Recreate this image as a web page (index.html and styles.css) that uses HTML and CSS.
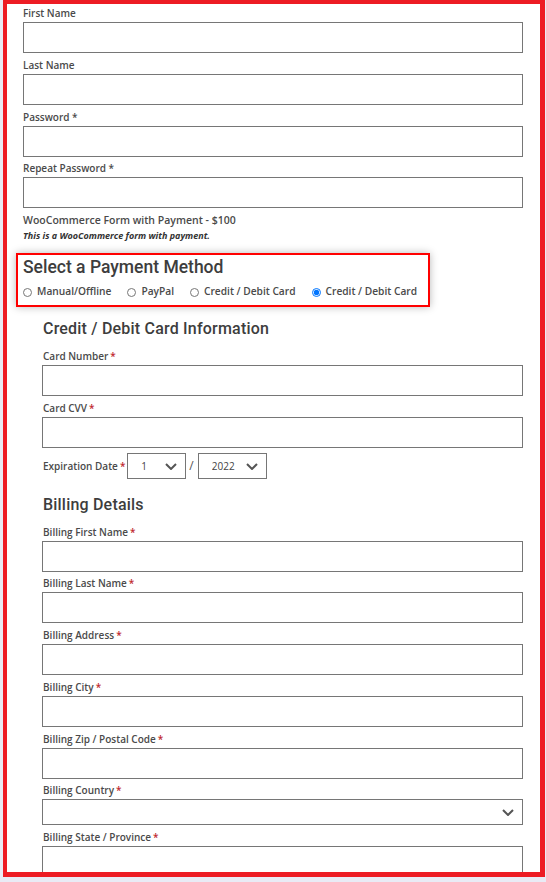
FILE: index.html
```html
<!DOCTYPE html>
<html lang="en">
<head>
  <meta charset="UTF-8">
  <meta name="viewport" content="width=device-width, initial-scale=1.0">
  <title>WooCommerce Form with Payment</title>
  <link rel="stylesheet" href="styles.css">
</head>
<body>
  <div class="frame">
    <form class="reg-form">
      <div class="field">
        <label>First Name</label>
        <input type="text">
      </div>
      <div class="field">
        <label>Last Name</label>
        <input type="text">
      </div>
      <div class="field">
        <label>Password *</label>
        <input type="password">
      </div>
      <div class="field">
        <label>Repeat Password *</label>
        <input type="password">
      </div>

      <p class="product-name">WooCommerce Form with Payment - $100</p>
      <p class="product-desc">This is a WooCommerce form with payment.</p>

      <div class="payment-box">
        <h3>Select a Payment Method</h3>
        <div class="gateways">
          <label class="gateway"><input type="radio" name="gateway">Manual/Offline</label>
          <label class="gateway"><input type="radio" name="gateway">PayPal</label>
          <label class="gateway"><input type="radio" name="gateway">Credit / Debit Card</label>
          <label class="gateway"><input type="radio" name="gateway" checked>Credit / Debit Card</label>
        </div>
      </div>

      <div class="card-section">
        <h4>Credit / Debit Card Information</h4>
        <div class="field">
          <label>Card Number<span class="req">*</span></label>
          <input type="text">
        </div>
        <div class="field">
          <label>Card CVV<span class="req">*</span></label>
          <input type="text">
        </div>
        <div class="expiry">
          <label>Expiration Date<span class="req">*</span></label>
          <div class="select-wrap month">
            <select><option>1</option></select>
            <svg class="chevron" width="12" height="7" viewBox="0 0 12 7"><polyline points="1,1 6,6 11,1"/></svg>
          </div>
          <span class="slash">/</span>
          <div class="select-wrap year">
            <select><option>2022</option></select>
            <svg class="chevron" width="12" height="7" viewBox="0 0 12 7"><polyline points="1,1 6,6 11,1"/></svg>
          </div>
        </div>

        <h4 class="billing-title">Billing Details</h4>
        <div class="field">
          <label>Billing First Name<span class="req">*</span></label>
          <input type="text">
        </div>
        <div class="field">
          <label>Billing Last Name<span class="req">*</span></label>
          <input type="text">
        </div>
        <div class="field">
          <label>Billing Address<span class="req">*</span></label>
          <input type="text">
        </div>
        <div class="field">
          <label>Billing City<span class="req">*</span></label>
          <input type="text">
        </div>
        <div class="field">
          <label>Billing Zip / Postal Code<span class="req">*</span></label>
          <input type="text">
        </div>
        <div class="field">
          <label>Billing Country<span class="req">*</span></label>
          <div class="select-wrap country">
            <select><option></option></select>
            <svg class="chevron" width="12" height="7" viewBox="0 0 12 7"><polyline points="1,1 6,6 11,1"/></svg>
          </div>
        </div>
        <div class="field">
          <label>Billing State / Province<span class="req">*</span></label>
          <input type="text">
        </div>
      </div>
    </form>
  </div>
</body>
</html>
```

FILE: styles.css
```css
body {
  font-family: 'Open Sans', 'Noto Sans', sans-serif;
  background-color: #e9ebf5;
  color: #444;
  margin: 0;
  padding: 0;
}
.frame {
  margin: 0 1px 0 3px;
  height: 877px;
  box-sizing: border-box;
  background-color: #fff;
  border: solid #ed1c24;
  border-width: 4px 5px 5px 4px;
  overflow: hidden;
}
.reg-form {
  padding: 2px 17px 0 16px;
}
.field {
  margin-bottom: 4.75px;
}
.field label {
  display: block;
  font-size: 10px;
  font-weight: 600;
  line-height: 14px;
  color: #4a4a4a;
  margin-bottom: 2px;
}
.field input {
  display: block;
  width: 100%;
  height: 31px;
  box-sizing: border-box;
  border: 1px solid #767676;
  margin: 0;
  padding: 0 8px;
  font-family: inherit;
}
.req {
  color: #c0282d;
  margin-left: 2px;
}
.product-name {
  margin: 0;
  font-size: 10.5px;
  line-height: 15px;
  font-weight: 600;
  color: #4a4a4a;
}
.product-desc {
  margin: 2px 0 0;
  font-size: 9px;
  line-height: 12px;
  font-style: italic;
  font-weight: 700;
  color: #333;
}
.payment-box {
  margin: 11px 0 0 -7px;
  width: 414px;
  box-sizing: border-box;
  border: 2px solid #f00;
  padding: 1px 6px 7px 5px;
  box-shadow: 0 0 8px rgba(0, 0, 0, 0.28);
}
.payment-box h3 {
  margin: 0;
  font-family: Roboto, 'Open Sans', sans-serif;
  font-size: 17.5px;
  font-weight: 500;
  line-height: 22px;
  color: #3d3d3d;
}
.gateways {
  display: flex;
  gap: 16px;
  margin-top: 6px;
  white-space: nowrap;
}
.gateway {
  display: flex;
  align-items: center;
  gap: 5px;
  font-size: 10.2px;
  font-weight: 600;
  line-height: 14px;
  color: #4a4a4a;
}
.gateway input {
  width: 9px;
  height: 9px;
  margin: 2px 0 0;
}
.card-section {
  margin-left: 19px;
}
.card-section label {
  padding-left: 1px;
}
.card-section h4 {
  margin: 12px 0 10px 1px;
  font-family: Roboto, 'Open Sans', sans-serif;
  font-size: 16px;
  font-weight: 500;
  letter-spacing: 0.2px;
  line-height: 20px;
  color: #3d3d3d;
}
.card-section h4.billing-title {
  margin-top: 16px;
}
.expiry {
  display: flex;
  align-items: center;
}
.expiry label {
  font-size: 10px;
  font-weight: 600;
  line-height: 14px;
  color: #4a4a4a;
  margin-right: 2px;
}
.slash {
  font-size: 12px;
  color: #555;
  margin: 0 4px 0 3px;
}
.select-wrap {
  position: relative;
}
.select-wrap select {
  display: block;
  appearance: none;
  -webkit-appearance: none;
  width: 100%;
  height: 26px;
  box-sizing: border-box;
  border: 1px solid #767676;
  border-radius: 0;
  background-color: #fff;
  padding: 0 0 0 13px;
  font-family: inherit;
  font-size: 10px;
  color: #444;
}
.select-wrap.month {
  width: 59px;
}
.select-wrap.year {
  width: 69px;
}
.chevron {
  position: absolute;
  right: 9px;
  top: 10px;
  pointer-events: none;
  fill: none;
  stroke: #555;
  stroke-width: 2;
}
```
